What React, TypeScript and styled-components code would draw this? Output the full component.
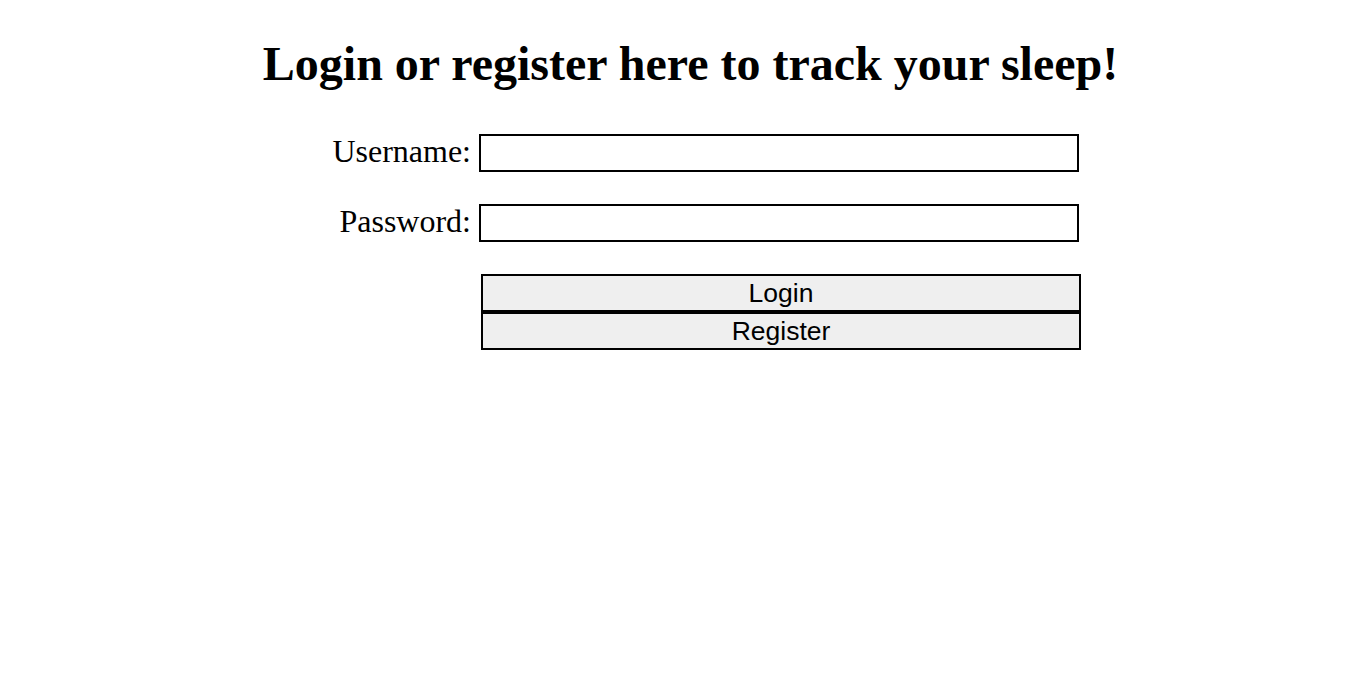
import React from "react";
import styled, { createGlobalStyle } from "styled-components";

const Global = createGlobalStyle`
  html, body { margin: 0; padding: 0; background: #fff; }
  body { font-family: "Liberation Serif", "Times New Roman", serif; color: #000; }
`;

const Page = styled.div`
  display: flex;
  flex-direction: column;
  width: 1355px;
`;

const Title = styled.h1`
  margin: 36px 0 0 0;
  padding-left: 26px;
  text-align: center;
  font-family: "Liberation Serif", serif;
  font-weight: 700;
  font-size: 48px;
  line-height: 56px;
`;

const Form = styled.form`
  display: grid;
  grid-template-columns: 150px 600px;
  column-gap: 8px;
  row-gap: 32px;
  margin: 42px 0 0 321px;
  align-items: center;
`;

const Label = styled.label`
  align-self: start;
  text-align: right;
  font-family: "Liberation Serif", serif;
  font-size: 32px;
  line-height: 34px;
`;

const Input = styled.input`
  box-sizing: border-box;
  width: 600px;
  height: 38px;
  border: 2px solid #000;
  background: #fff;
  padding: 0 4px;
  font-size: 20px;
  outline: none;
`;

const Buttons = styled.div`
  grid-column: 2;
  display: flex;
  flex-direction: column;
  margin-left: 2px;
`;

const Button = styled.button`
  box-sizing: border-box;
  width: 600px;
  height: 38px;
  border: 2px solid #000;
  background: #efefef;
  font-family: "Liberation Sans", Arial, sans-serif;
  font-size: 26.5px;
  color: #000;
  padding: 0;
  cursor: pointer;
`;

export default function App() {
  return (
    <>
      <Global />
      <Page>
        <Title>Login or register here to track your sleep!</Title>
        <Form onSubmit={(e) => e.preventDefault()}>
          <Label htmlFor="username">Username:</Label>
          <Input id="username" type="text" />
          <Label htmlFor="password">Password:</Label>
          <Input id="password" type="password" />
          <Buttons>
            <Button type="submit">Login</Button>
            <Button type="button">Register</Button>
          </Buttons>
        </Form>
      </Page>
    </>
  );
}
